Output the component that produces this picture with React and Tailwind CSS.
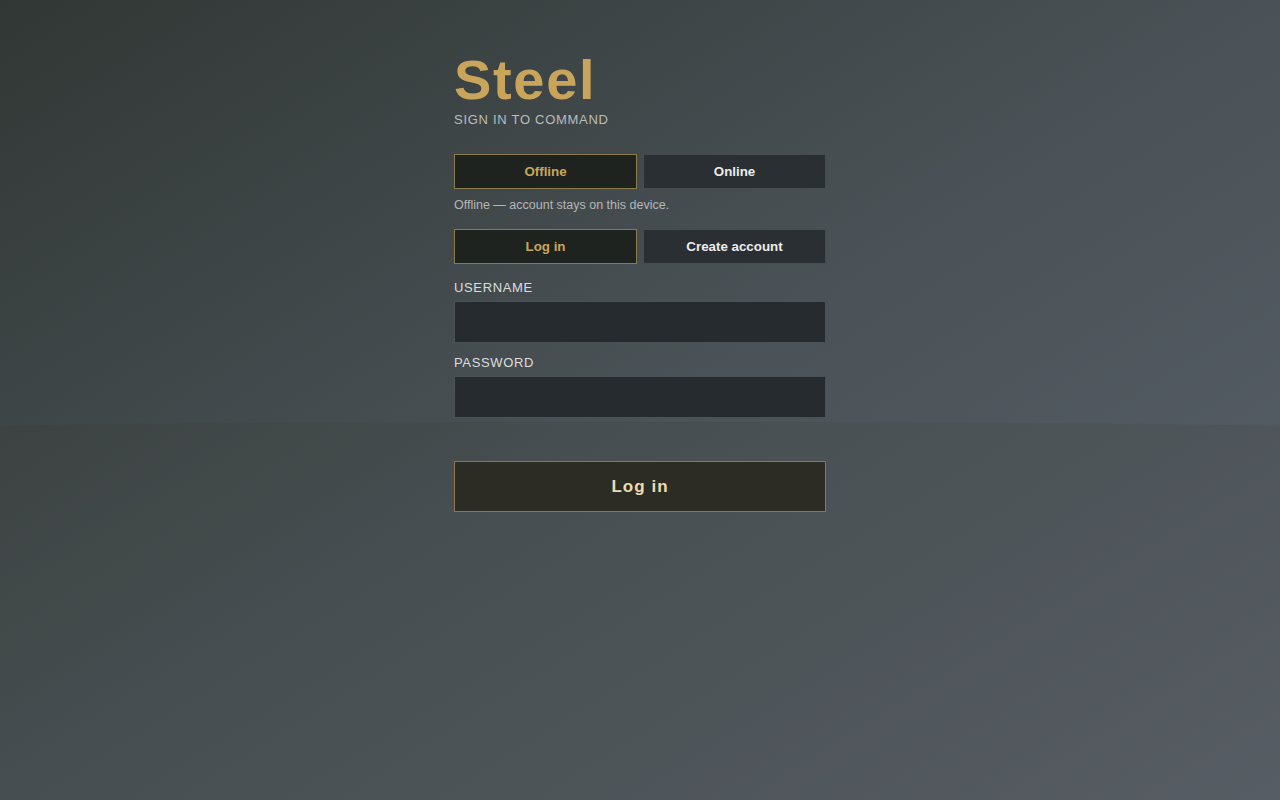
import { useState } from "react";

function Toggle({ options, value, onChange }) {
  return (
    <div className="grid grid-cols-2 gap-[6px]">
      {options.map((o) => {
        const active = o === value;
        return (
          <button
            key={o}
            onClick={() => onChange(o)}
            className={
              active
                ? "h-[35px] border border-[#8c7a4c] bg-[#1e2320] text-[13.333px] font-bold text-[#c9a55c]"
                : "h-[35px] border border-[#464c50] bg-[#2a2f33] text-[13.333px] font-bold text-[#ececec]"
            }
          >
            {o}
          </button>
        );
      })}
    </div>
  );
}

export default function App() {
  const [mode, setMode] = useState("Offline");
  const [tab, setTab] = useState("Log in");

  return (
    <div className="relative min-h-[800px] w-full overflow-hidden bg-[linear-gradient(to_bottom_right,#313734_0%,#4a5257_50%,#5b626c_100%)] font-['Liberation_Sans',Arial,sans-serif]">
      {/* horizon */}
      <div className="pointer-events-none absolute inset-x-0 top-[422px] bottom-0 rounded-t-[50%_5px] bg-[rgba(45,46,25,0.09)]" />

      <div className="relative mx-auto w-[372px] pt-[48px]">
        <h1 className="text-[56px] font-bold leading-[64px] tracking-[0.03em] text-[#c9a55c]">Steel</h1>
        <p className="mt-0 text-[13px] leading-[16px] tracking-[0.055em] text-[#b9bdbd]">SIGN IN TO COMMAND</p>

        <div className="mt-[26px]">
          <Toggle options={["Offline", "Online"]} value={mode} onChange={setMode} />
        </div>
        <p className="mt-[6px] text-[12.5px] leading-[20px] text-[#b3b7b7]">Offline — account stays on this device.</p>

        <div className="mt-[14px]">
          <Toggle options={["Log in", "Create account"]} value={tab} onChange={setTab} />
        </div>

        <label className="mt-[14px] block text-[13px] leading-[20px] tracking-[0.05em] text-[#dcdede]">USERNAME</label>
        <input className="mt-[3px] block h-[42px] w-full border border-[#4b5156] bg-[#262b30] px-3 text-[14px] text-white outline-none" />

        <label className="mt-[10px] block text-[13px] leading-[20px] tracking-[0.05em] text-[#dcdede]">PASSWORD</label>
        <input type="password" className="mt-[3px] block h-[42px] w-full border border-[#4b5156] bg-[#262b30] px-3 text-[14px] text-white outline-none" />

        <button className="mt-[43px] block h-[51px] w-full border border-[#8d7650] bg-[#2d2c24] text-[17px] font-bold tracking-[0.06em] text-[#ecdcb0]">
          {tab === "Log in" ? "Log in" : "Create account"}
        </button>
      </div>
    </div>
  );
}
